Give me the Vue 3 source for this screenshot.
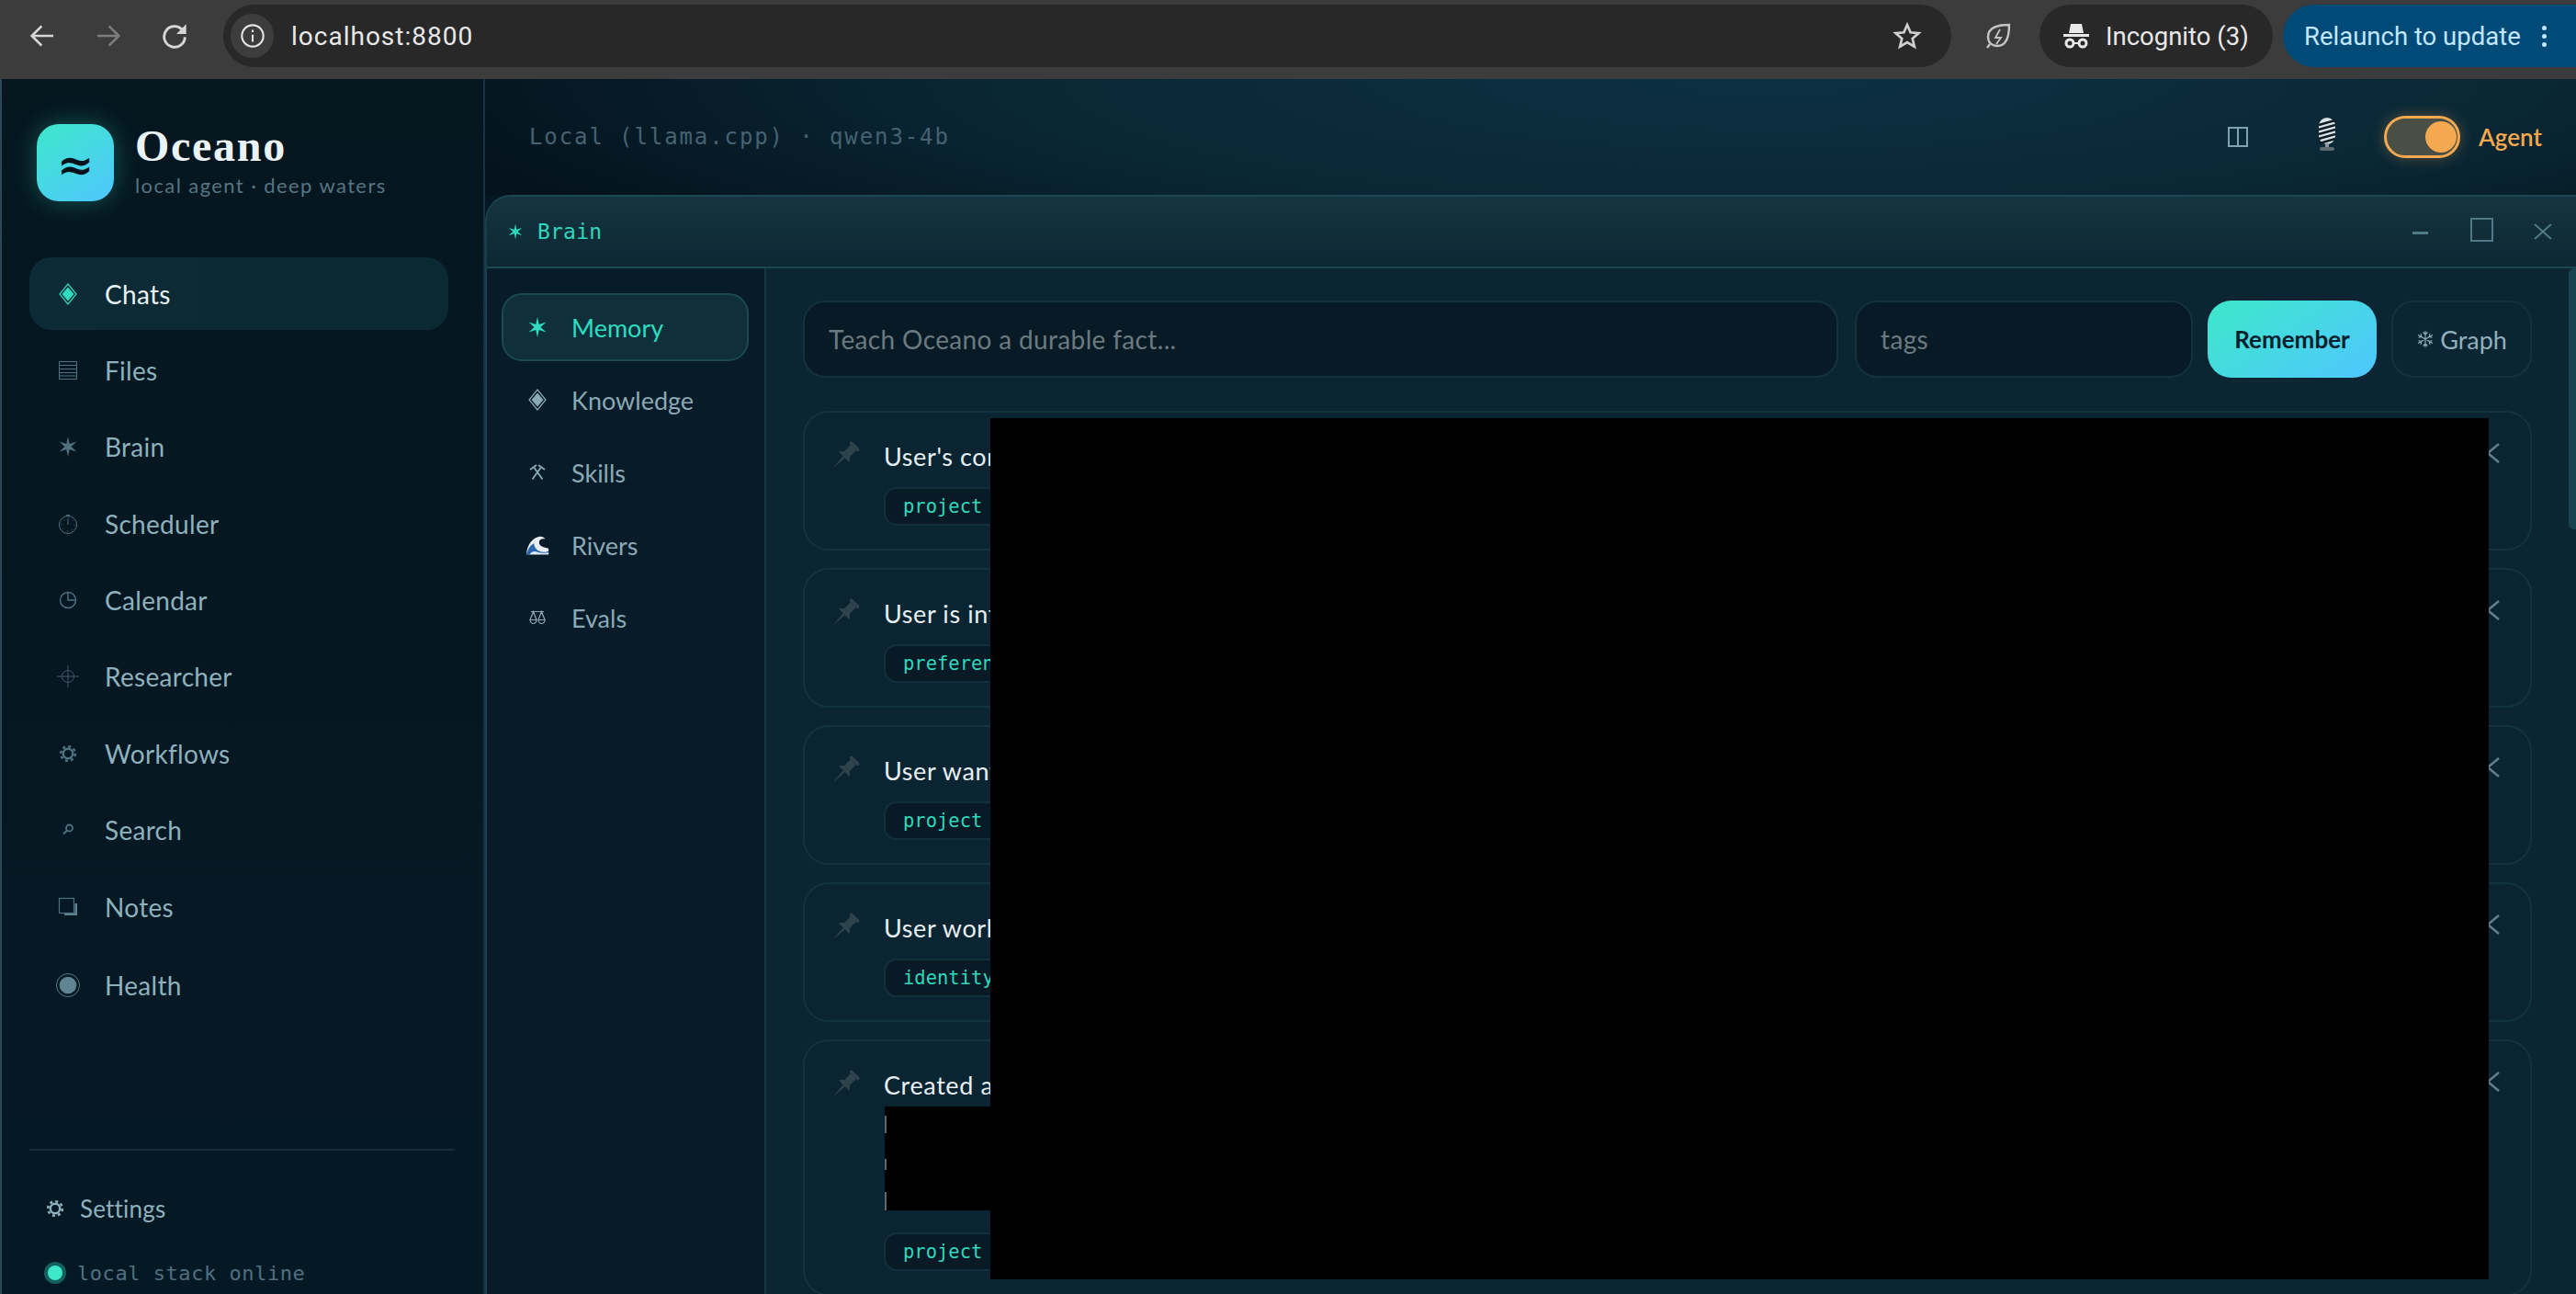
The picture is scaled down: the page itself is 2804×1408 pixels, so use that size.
<template>
  <div class="page">
    <header class="chrome">
      <button class="cbtn"><svg viewBox="0 0 24 24" class="cicon" fill="none" stroke="#d6d6d6" stroke-width="2"><path d="M21 12H4M11.500 4L3.500 12l8 8" /></svg></button>
      <button class="cbtn"><svg viewBox="0 0 24 24" class="cicon" fill="none" stroke="#7c7c7c" stroke-width="2"><path d="M3 12h17M12.500 4l8 8-8 8" /></svg></button>
      <button class="cbtn"><svg viewBox="0 0 24 24" class="cicon" fill="none" stroke="#d6d6d6" stroke-width="2.200"><path d="M20.500 13a8.500 8.500 0 1 1-2.700-6.500L20.500 9" /><path d="M21.500 2.500v8h-8" fill="#d6d6d6" stroke="none" /></svg></button>
      <div class="omnibox">
        <span class="site-info"><svg viewBox="0 0 24 24" width="28" height="28" fill="none" stroke="#e4e4e4" stroke-width="1.800"><circle cx="12" cy="12" r="10" /><path d="M12 11v6.500M12 6.500v2" /></svg></span>
        <span class="url">localhost:8800</span>
        <svg class="star" viewBox="0 0 24 24" width="32" height="32" fill="none" stroke="#d0d0d0" stroke-width="2"><path d="M12 3l2.700 6.200 6.700.6-5.100 4.400 1.600 6.600L12 17.300l-5.900 3.500 1.600-6.600-5.100-4.400 6.700-.6z" /></svg>
      </div>
      <span class="leaf"><svg viewBox="0 0 30 30" width="30" height="30" fill="none" stroke="#c4c4c4" stroke-width="2.400"><path d="M27 3C16 3 4 5 4 16c0 6 4 10 10 10 9 0 13-9 13-23z" /><path d="M17 8l-5 9h6l-5 7" stroke-width="1.800" /><path d="M3 28l3-4" /></svg></span>
      <div class="incognito">
        <svg viewBox="0 0 30 30" width="30" height="30" fill="#e8e8e8"><path d="M7 12L9 2h12l2 10z" /><rect x="1" y="13" width="28" height="3" /><circle cx="8" cy="23" r="4" fill="none" stroke="#e8e8e8" stroke-width="3" /><circle cx="22" cy="23" r="4" fill="none" stroke="#e8e8e8" stroke-width="3" /><rect x="12" y="22" width="6" height="2" /></svg>
        <span>Incognito (3)</span>
      </div>
      <div class="relaunch">
        <span>Relaunch to update</span>
        <span class="dots"><i></i><i></i><i></i></span>
      </div>
    </header>

    <div class="app">
      <aside class="sidebar">
        <div class="brand">
          <div class="logo">≈</div>
          <div>
            <div class="name">Oceano</div>
            <div class="tagline">local agent · deep waters</div>
          </div>
        </div>
        <nav class="nav">
          <a v-for="item in navItems" :key="item.label" class="nav-item" :class="{ active: item.active }">
            <svg class="nav-icon" viewBox="0 0 24 24" v-html="icons[item.icon]"></svg>
            <span>{{ item.label }}</span>
          </a>
        </nav>
        <div class="side-foot">
          <div class="settings">
            <svg class="foot-icon" viewBox="0 0 24 24" v-html="icons.gear"></svg>
            <span>Settings</span>
          </div>
          <div class="status">
            <span class="status-dot"></span>
            <span>local stack online</span>
          </div>
        </div>
      </aside>

      <main class="content">
        <div class="topbar">
          <span class="model">Local (llama.cpp) · qwen3-4b</span>
          <svg class="split" viewBox="0 0 22 22" width="22" height="22" fill="none" stroke="#7fa3b0" stroke-width="2"><rect x="1" y="1" width="20" height="20" /><path d="M11 1v20" /></svg>
          <svg class="mic" viewBox="0 0 26 38" width="26" height="38">
            <rect x="4" y="1" width="18" height="29" rx="9" fill="#d8e2e6" />
            <path d="M4 9l18-5M4 14l18-5M4 19l18-5M4 24l18-5M5 29l17-5" stroke="#0e1b22" stroke-width="2.600" />
            <rect x="11" y="29" width="4" height="5" fill="#8a979c" />
            <rect x="5" y="33" width="16" height="4" rx="2" fill="#5d6b70" />
          </svg>
          <div class="toggle"><span class="knob"></span></div>
          <span class="agent">Agent</span>
        </div>

        <section class="window">
          <div class="titlebar">
            <svg class="title-star" viewBox="0 0 24 24" v-html="icons.star"></svg>
            <span class="title">Brain</span>
            <div class="win-controls">
              <span class="win-min"></span>
              <span class="win-max"></span>
              <svg width="20" height="18" viewBox="0 0 20 18" stroke="#4f7a88" stroke-width="2"><path d="M1 1l18 16M19 1L1 17" /></svg>
            </div>
          </div>
          <div class="win-body">
            <div class="tabs">
              <a v-for="tab in tabs" :key="tab.label" class="tab" :class="{ active: tab.active }">
                <svg v-if="tab.icon !== 'wave'" class="tab-icon" viewBox="0 0 24 24" v-html="icons[tab.icon]"></svg>
                <svg v-else class="tab-icon" viewBox="0 0 28 24">
                  <path d="M1 23C2 12 8 3 17 2c3 0 5 1 6 3-4-1-7 1-7 4 0 4 5 6 11 7v7z" fill="#e8eef2" />
                  <path d="M1 23c2-7 5-11 9-13 0 5 4 9 9 10 3 1 6 0 8-1v4z" fill="#2a66ad" />
                  <path d="M5 23c2-3 5-4 8-3 4 1 9 2 14 1v2z" fill="#dfe8f0" />
                </svg>
                <span>{{ tab.label }}</span>
              </a>
            </div>
            <div class="memory">
              <div class="toolbar">
                <div class="field grow">Teach Oceano a durable fact...</div>
                <div class="field tags">tags</div>
                <button class="remember">Remember</button>
                <button class="graph">
                  <svg viewBox="0 0 24 24" width="20" height="20" fill="none" stroke="#8fb0bc" stroke-width="1.300"><path d="M12 1v22M2.500 6.500l19 11M21.500 6.500l-19 11M9 3l3 3 3-3M9 21l3-3 3 3M3 10l4-1-1-4M21 10l-4-1 1-4M3 14l4 1-1 4M21 14l-4 1 1 4" /></svg>
                  Graph
                </button>
              </div>
              <div class="cards">
                <article v-for="card in cards" :key="card.text" class="card">
                  <svg class="pin" viewBox="0 0 28 27">
                    <g transform="translate(19 9) rotate(45) scale(1.200)" fill="#2e434c">
                      <rect x="-5.500" y="-10" width="11" height="3" rx="1" />
                      <rect x="-3.500" y="-7" width="7" height="8" />
                      <path d="M-3.500 1h7L7 5H-7z" />
                      <path d="M-1.200 5h2.400L0 20z" />
                    </g>
                  </svg>
                  <div class="card-body">
                    <div class="card-text">{{ card.text }}</div>
                    <div v-if="card.hidden" class="blackout"></div>
                    <span class="chip">{{ card.tag }}</span>
                  </div>
                  <svg class="del" viewBox="0 0 26 22" stroke="#5f808c" stroke-width="2.400"><path d="M1 1l24 20M25 1L1 21" /></svg>
                </article>
              </div>
            </div>
            <div class="scroll-thumb"></div>
          </div>
        </section>
      </main>
    </div>
    <div class="redacted"></div>
  </div>
</template>

<script setup>
const sixStar = '<polygon fill="currentColor" points="12,1 13.75,8.97 21.5,6.5 15.5,12 21.5,17.5 13.75,15.03 12,23 10.25,15.03 2.5,17.5 8.5,12 2.5,6.5 10.25,8.97"/>'

const icons = {
  diamond: '<path d="M12 1l9 11-9 11-9-11z" fill="none" stroke="currentColor" stroke-width="1.2"/><path d="M12 4.500l6.500 7.500-6.500 7.500L5.500 12z" fill="currentColor"/>',
  files: '<g fill="none" stroke="currentColor" stroke-width="1"><rect x="2.500" y="2.500" width="19" height="19"/><path d="M2.500 6.500h19M2.500 10.500h19M2.500 14.500h19M2.500 18h19"/></g>',
  star: sixStar,
  stopwatch: '<g fill="none" stroke="currentColor" stroke-width="1"><circle cx="12" cy="13" r="9.500"/><path d="M12 13V7M10 2.500h4"/><circle cx="12" cy="13" r="7" stroke-dasharray="1 4.500"/></g>',
  quadrant: '<g fill="none" stroke="currentColor" stroke-width="1.400"><circle cx="12" cy="12" r="8.500"/><path d="M12 3.500V12h8.500"/></g>',
  target: '<g fill="none" stroke="currentColor" stroke-width="1" opacity=".75"><circle cx="12" cy="12" r="6.500"/><path d="M0 12h24M12 0v24"/></g>',
  gear: '<g fill="none" stroke="currentColor"><circle cx="12" cy="12" r="5.200" stroke-width="2.400"/><circle cx="12" cy="12" r="7.800" stroke-width="2.600" stroke-dasharray="3 3.120"/></g>',
  search: '<g fill="none" stroke="currentColor" stroke-width="1.800"><circle cx="13.500" cy="10" r="3.500"/><path d="M11 12.500l-4 4"/></g>',
  notes: '<path d="M8 21h14V8h-2.500v10.500H8z" fill="#5f8290"/><rect x="2.500" y="2.500" width="16" height="16" fill="none" stroke="currentColor" stroke-width="1.200"/>',
  health: '<circle cx="12" cy="12" r="12.500" fill="none" stroke="#5f8492" stroke-width=".9"/><circle cx="12" cy="12" r="9.300" fill="#5f8492"/>',
  tools: '<g fill="none" stroke="currentColor" stroke-width="1.900"><path d="M6.500 19.500L15.500 7M17.500 19.500L8.500 7"/><path d="M4 9l7-5M20 9l-7-5"/></g>',
  scales: '<g fill="none" stroke="currentColor" stroke-width="1.200"><path d="M7.500 5.500L4 14.500h7zM16.500 5.500L13 14.500h7zM4 14.500a3.500 4 0 0 0 7 0M13 14.500a3.500 4 0 0 0 7 0M5 5.500h14"/></g>'
}

const navItems = [
  { label: 'Chats', icon: 'diamond', active: true },
  { label: 'Files', icon: 'files' },
  { label: 'Brain', icon: 'star' },
  { label: 'Scheduler', icon: 'stopwatch' },
  { label: 'Calendar', icon: 'quadrant' },
  { label: 'Researcher', icon: 'target' },
  { label: 'Workflows', icon: 'gear' },
  { label: 'Search', icon: 'search' },
  { label: 'Notes', icon: 'notes' },
  { label: 'Health', icon: 'health' }
]

const tabs = [
  { label: 'Memory', icon: 'star', active: true },
  { label: 'Knowledge', icon: 'diamond' },
  { label: 'Skills', icon: 'tools' },
  { label: 'Rivers', icon: 'wave' },
  { label: 'Evals', icon: 'scales' }
]

const cards = [
  { text: "User's cor", tag: 'project' },
  { text: 'User is int', tag: 'preferen' },
  { text: 'User want', tag: 'project' },
  { text: 'User work', tag: 'identity' },
  { text: 'Created a', tag: 'project', hidden: true }
]
</script>

<style>
html, body { margin: 0; background: #051722; overflow: hidden; }
</style>

<style scoped>
.page {
  position: relative;
  width: 2804px;
  height: 1408px;
  overflow: hidden;
  display: flex;
  flex-direction: column;
  font-family: "Lato", "Noto Sans", sans-serif;
}
button { font-family: inherit; border: none; background: none; padding: 0; }

/* browser bar */
.chrome {
  height: 86px;
  flex: none;
  display: flex;
  align-items: center;
  background: #3c3c3c;
  padding-left: 10px;
  box-sizing: border-box;
}
.cbtn { width: 72px; height: 72px; display: flex; align-items: center; justify-content: center; margin-top: -8px; }
.cicon { width: 32px; height: 32px; }
.omnibox {
  flex: 1;
  height: 68px;
  margin-left: 17px;
  margin-top: -8px;
  border-radius: 34px;
  background: #282828;
  display: flex;
  align-items: center;
  padding: 0 32px 0 8px;
}
.site-info {
  width: 47px;
  height: 48px;
  border-radius: 50%;
  background: #3d3d3d;
  display: flex;
  align-items: center;
  justify-content: center;
}
.url { margin-left: 19px; color: #e8e8e8; font: 28px "Roboto", sans-serif; letter-spacing: 1px; }
.star { margin-left: auto; }
.leaf { width: 96px; display: flex; justify-content: center; margin-top: -8px; padding-left: 6px; box-sizing: border-box; }
.incognito {
  width: 254px;
  height: 68px;
  margin-top: -8px;
  border-radius: 34px;
  background: #282828;
  color: #e8e8e8;
  font: 27.500px "Roboto", sans-serif;
  display: flex;
  align-items: center;
  gap: 17px;
  padding-left: 25px;
  box-sizing: border-box;
}
.relaunch {
  width: 319px;
  height: 68px;
  margin-left: 11px;
  margin-top: -8px;
  border-radius: 34px 0 0 34px;
  background: #004a77;
  color: #c2e7ff;
  font: 27.500px "Roboto", sans-serif;
  display: flex;
  align-items: center;
  padding-left: 23px;
  box-sizing: border-box;
}
.dots { display: flex; flex-direction: column; gap: 4px; margin-left: 23px; }
.dots i { width: 5px; height: 5px; border-radius: 50%; background: #c2e7ff; }

.app { flex: 1; display: flex; min-height: 0; }

/* sidebar */
.sidebar {
  width: 528px;
  flex: none;
  box-sizing: border-box;
  display: flex;
  flex-direction: column;
  padding: 49px 32px 0;
  border-left: 2px solid #2c4854;
  border-right: 2px solid #143240;
  background: linear-gradient(180deg, #05161f 0%, #051925 100%);
}
.brand { display: flex; gap: 23px; margin-left: 6px; margin-bottom: 61px; }
.logo {
  width: 84px;
  height: 84px;
  border-radius: 24px;
  background: linear-gradient(145deg, #3de8c9, #4fc6ff);
  box-shadow: 0 0 28px rgba(61, 232, 201, .3);
  color: #04121c;
  font: bold 48px "DejaVu Serif", serif;
  display: flex;
  align-items: center;
  justify-content: center;
  padding-top: 4px;
  box-sizing: border-box;
}
.name { color: #eaf4f6; font: bold 48px/46px "Liberation Serif", serif; letter-spacing: 1.700px; margin-top: 1px; }
.tagline { color: #557583; font-size: 22px; line-height: 28px; letter-spacing: 1.400px; margin-top: 6px; }
.nav { display: flex; flex-direction: column; gap: 4.400px; margin-left: -2px; width: 456px; }
.nav-item {
  height: 79px;
  flex: none;
  border-radius: 24px;
  display: flex;
  align-items: center;
  gap: 20px;
  padding-left: 22px;
  color: #8db1bd;
  font-size: 28px;
  letter-spacing: .3px;
}
.nav-item.active {
  background: linear-gradient(90deg, #0c2b36, #0b2933);
  color: #e6f2f4;
}
.nav-icon { width: 24px; height: 24px; margin: 0 8px; color: #4f7280; flex: none; overflow: visible; }
.nav-item.active .nav-icon { color: #2fdcc0; }
.nav-item:last-child { margin-top: 2px; }

.side-foot {
  margin: auto -1px 0 -2px;
  border-top: 2px solid #112e3a;
  height: 158px;
  box-sizing: border-box;
  padding-top: 44px;
}
.settings { display: flex; align-items: center; gap: 15px; height: 38px; padding-left: 16px; color: #8db1bd; font-size: 26px; letter-spacing: .2px; }
.foot-icon { width: 24px; height: 24px; color: #8db1bd; }
.status {
  display: flex;
  align-items: center;
  gap: 12px;
  height: 30px;
  margin-top: 36px;
  padding-left: 16px;
  color: #4f7080;
  font: 22px "DejaVu Sans Mono", monospace;
  letter-spacing: .55px;
}
.status-dot {
  width: 16px;
  height: 16px;
  margin: 4px;
  border-radius: 50%;
  background: #3de8c9;
  box-shadow: 0 0 0 4px #14605f;
}

/* main */
.content { flex: 1; min-width: 0; display: flex; flex-direction: column; }
.topbar {
  height: 126px;
  flex: none;
  display: flex;
  align-items: center;
  padding: 0 37px 0 48px;
  background: radial-gradient(ellipse 1500px 260px at 1400px 0, #0d3142 0%, #0a2735 55%, #04131d 100%);
}
.model {
  color: #466272;
  font: 24px "DejaVu Sans Mono", monospace;
  letter-spacing: 1.900px;
}
.split { margin-left: auto; }
.mic { margin-left: 73px; margin-top: -6px; }
.toggle {
  width: 83px;
  height: 46px;
  margin-left: 49px;
  box-sizing: border-box;
  border: 3px solid #f4a950;
  border-radius: 23px;
  background: #4a4f45;
  box-shadow: 0 0 16px rgba(244, 169, 80, .3);
  display: flex;
  align-items: center;
  justify-content: flex-end;
  padding-right: 1px;
}
.knob { width: 34px; height: 34px; border-radius: 50%; background: #f4a950; }
.agent { margin-left: 20px; color: #f6a94f; font-size: 26px; font-weight: 600; }

.window {
  flex: 1;
  min-height: 0;
  display: flex;
  flex-direction: column;
  border-top: 2px solid #1e4755;
  border-left: 2px solid #1a3f4c;
  border-top-left-radius: 28px;
  overflow: hidden;
  background: #0b2532;
}
.titlebar {
  height: 76px;
  flex: none;
  display: flex;
  align-items: center;
  padding-left: 22px;
  border-bottom: 2px solid #1c4653;
  background: linear-gradient(180deg, #143540, #0d2733);
}
.title-star { width: 18px; height: 18px; color: #2fd8bd; }
.title { margin-left: 15px; color: #2fd8bd; font: 23px "DejaVu Sans Mono", monospace; letter-spacing: .2px; }
.win-controls { margin-left: auto; display: flex; align-items: center; padding-right: 26px; }
.win-min { width: 17px; height: 3px; background: #4f7a88; margin-top: 2px; }
.win-max { width: 25px; height: 26px; margin-left: 46px; box-sizing: border-box; border: 2px solid #4f7a88; margin-top: -4px; }
.win-controls svg { margin-left: 44px; }

.win-body { flex: 1; min-height: 0; display: flex; position: relative; }
.tabs {
  width: 304px;
  flex: none;
  box-sizing: border-box;
  padding: 27px 17px 27px 16px;
  border-right: 2px solid #143542;
  background: #071b28;
  display: flex;
  flex-direction: column;
  gap: 5px;
}
.tab {
  height: 74px;
  flex: none;
  box-sizing: border-box;
  border: 2px solid transparent;
  border-radius: 22px;
  display: flex;
  align-items: center;
  gap: 21px;
  padding-left: 21px;
  color: #8aa9b5;
  font-size: 27px;
}
.tab.active { background: #0f303b; border-color: #1a4a50; color: #2fdcc0; }
.tab-icon { width: 26px; height: 24px; margin: 0 3px; flex: none; color: #8aa9b5; }
.tab.active .tab-icon { color: #2fdcc0; }

.memory { flex: 1; min-width: 0; padding: 35px 48px 0 40px; }
.toolbar { display: flex; gap: 16px; height: 84px; margin-bottom: 36px; }
.field {
  box-sizing: border-box;
  border: 2px solid #14323e;
  border-radius: 24px;
  background: #071a25;
  color: #6b7a80;
  font-size: 28px;
  letter-spacing: .35px;
  display: flex;
  align-items: center;
  padding-left: 26px;
}
.grow { flex: 1; margin-right: 2px; }
.tags { width: 368px; }
.remember {
  width: 184px;
  border-radius: 26px;
  background: linear-gradient(145deg, #3de8c9, #4fc6ff);
  color: #04202c;
  font-size: 26px;
  font-weight: 700;
}
.graph {
  width: 153px;
  box-sizing: border-box;
  border: 2px solid #14323e;
  border-radius: 24px;
  color: #8fb0bc;
  font-size: 27px;
  display: flex;
  align-items: center;
  justify-content: center;
  gap: 6px;
}
.cards { display: flex; flex-direction: column; gap: 19px; }
.card {
  flex: none;
  box-sizing: border-box;
  border: 2px solid #133342;
  border-radius: 28px;
  display: flex;
  padding: 30px 33px 25px 28px;
  background: #0b2431;
}
.pin { width: 28px; height: 27px; margin-top: 5px; flex: none; overflow: visible; }
.card-body { margin-left: 30px; flex: 1; min-width: 0; }
.card-text { color: #e6eff2; font-size: 27px; line-height: 36px; letter-spacing: .6px; }
.blackout {
  width: 500px;
  height: 113px;
  margin: 5px 0 9px 1px;
  background:
    linear-gradient(#666, #666) 0 10px / 2px 19px no-repeat,
    linear-gradient(#666, #666) 0 57px / 2px 12px no-repeat,
    linear-gradient(#666, #666) 0 93px / 2px 20px no-repeat,
    #000;
}
.chip {
  display: inline-flex;
  align-items: center;
  width: 200px;
  height: 42px;
  margin-top: 15px;
  box-sizing: border-box;
  border: 2px solid #12303c;
  border-radius: 14px;
  background: #071a25;
  padding-left: 19px;
  color: #2fd8bd;
  font: 20.500px "DejaVu Sans Mono", monospace;
}
.del { width: 26px; height: 22px; margin-top: 3px; flex: none; }
.scroll-thumb {
  position: absolute;
  right: 0;
  top: 0;
  width: 8px;
  height: 284px;
  border-radius: 6px 0 0 6px;
  background: #1a4350;
}
.redacted {
  position: absolute;
  left: 1078px;
  top: 455px;
  width: 1631px;
  height: 937px;
  background: #000;
}
</style>
